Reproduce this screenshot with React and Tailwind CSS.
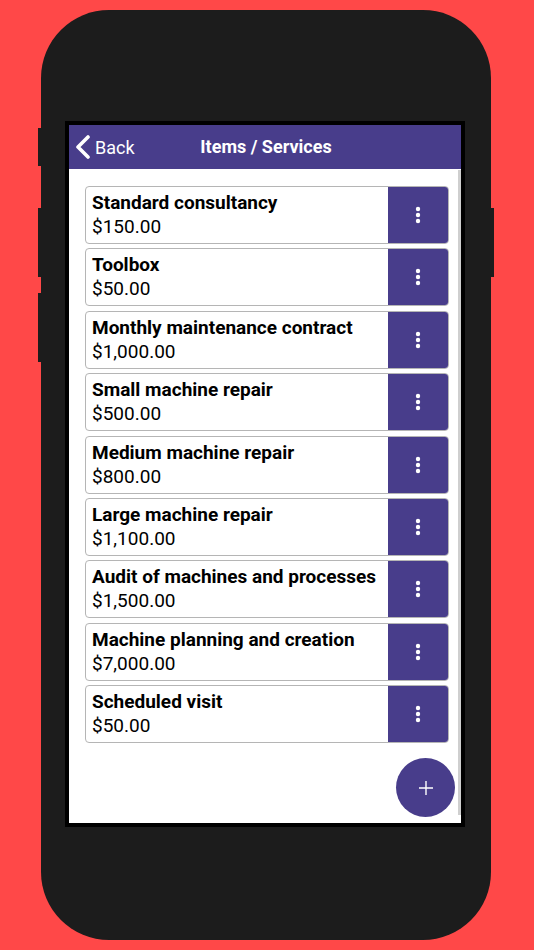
import React from 'react';

const ITEMS = [
  { name: 'Standard consultancy', price: '$150.00' },
  { name: 'Toolbox', price: '$50.00' },
  { name: 'Monthly maintenance contract', price: '$1,000.00' },
  { name: 'Small machine repair', price: '$500.00' },
  { name: 'Medium machine repair', price: '$800.00' },
  { name: 'Large machine repair', price: '$1,100.00' },
  { name: 'Audit of machines and processes', price: '$1,500.00' },
  { name: 'Machine planning and creation', price: '$7,000.00' },
  { name: 'Scheduled visit', price: '$50.00' },
];

function Dots() {
  return (
    <svg width="6" height="18" viewBox="0 0 6 18" fill="#fff">
      <circle cx="3" cy="3" r="2.2" />
      <circle cx="3" cy="9" r="2.2" />
      <circle cx="3" cy="15" r="2.2" />
    </svg>
  );
}

function ItemRow({ item }) {
  return (
    <div className="flex h-[58px] border border-[#b5b5b5] rounded-[4px] overflow-hidden bg-white">
      <div className="flex-1 flex flex-col justify-center pl-[6px] text-black text-[19px] leading-[24px]">
        <div className="font-bold">{item.name}</div>
        <div>{item.price}</div>
      </div>
      <button className="w-[60px] bg-[#483d8b] flex items-center justify-center">
        <Dots />
      </button>
    </div>
  );
}

export default function App() {
  return (
    <div
      className="w-[534px] h-[950px] bg-[#ff4848] pt-[10px] overflow-hidden"
      style={{ fontFamily: 'Roboto, "Liberation Sans", sans-serif' }}
    >
      <div className="relative ml-[41px] w-[450px] h-[930px] bg-[#1c1c1c] rounded-[68px] pt-[111px] pl-[24px]">
        {/* side buttons */}
        <div className="absolute left-[-3px] top-[118px] w-[3px] h-[38px] bg-[#1c1c1c]" />
        <div className="absolute left-[-3px] top-[198px] w-[3px] h-[69px] bg-[#1c1c1c]" />
        <div className="absolute left-[-3px] top-[283px] w-[3px] h-[69px] bg-[#1c1c1c]" />
        <div className="absolute right-[-3px] top-[198px] w-[3px] h-[69px] bg-[#1c1c1c]" />

        {/* screen */}
        <div className="w-[400px] h-[706px] border-4 border-black bg-white flex flex-col">
          <div className="h-[44px] bg-[#483d8b] relative flex items-center justify-center text-white">
            <div className="absolute left-[6px] top-0 h-full flex items-center gap-[4px]">
              <svg width="16" height="24" viewBox="0 0 16 24">
                <polyline points="13,2 3,12 13,22" fill="none" stroke="#fff" strokeWidth="3.6" strokeLinecap="round" strokeLinejoin="round" />
              </svg>
              <span className="text-[18px]">Back</span>
            </div>
            <span className="text-[18px] font-bold ml-[2px] mt-[-1px]">Items / Services</span>
          </div>

          <div className="flex-1 flex relative">
            <div className="flex-1 pl-[16px] pr-[9px] pt-[17px] flex flex-col gap-[4.4px]">
              {ITEMS.map((item) => (
                <ItemRow key={item.name} item={item} />
              ))}
            </div>
            <div className="w-[3px] mt-[1px] mb-[8px] bg-[#cfcfcf]" />

            <button className="absolute left-[327px] top-[589px] w-[59px] h-[59px] rounded-full bg-[#483d8b] flex items-center justify-center">
              <svg width="16" height="16" viewBox="0 0 16 16">
                <path d="M8 1v14M1 8h14" stroke="#fff" strokeWidth="1.4" />
              </svg>
            </button>
          </div>
        </div>
      </div>
    </div>
  );
}
